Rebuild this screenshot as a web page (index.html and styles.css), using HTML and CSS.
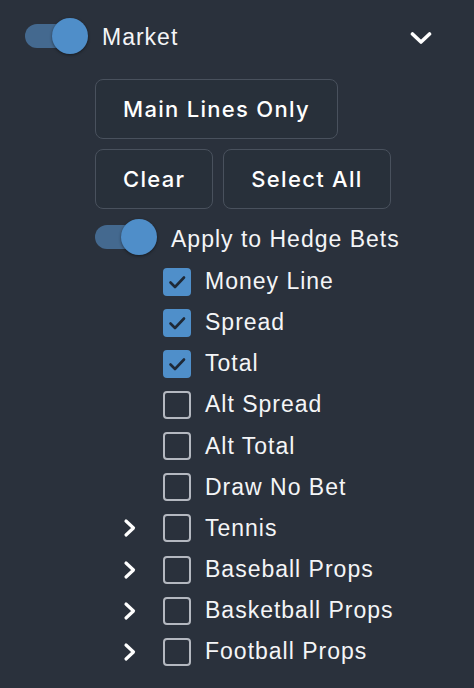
FILE: index.html
```html
<!DOCTYPE html>
<html>
<head>
<meta charset="utf-8">
<link rel="stylesheet" href="styles.css">
</head>
<body>
<div class="panel">
  <div class="header">
    <div class="toggle on"><span class="track"></span><span class="knob"></span></div>
    <span class="title">Market</span>
    <svg class="chev-down" width="22" height="14" viewBox="0 0 22 14"><path d="M2.5 3 L11 11 L19.5 3" fill="none" stroke="#fff" stroke-width="3.6" stroke-linecap="round" stroke-linejoin="round"/></svg>
  </div>
  <div class="content">
    <div class="btn-row"><button class="btn">Main Lines Only</button></div>
    <div class="btn-row"><button class="btn">Clear</button><button class="btn">Select All</button></div>
    <div class="hedge">
      <div class="toggle on"><span class="track"></span><span class="knob"></span></div>
      <span class="label">Apply to Hedge Bets</span>
    </div>
    <ul class="list">
      <li class="row"><span class="slot"></span><span class="cb checked"><svg width="28" height="28" viewBox="0 0 28 28"><path d="M7.5 14.5 L12 19 L21 9.5" fill="none" stroke="#1e2937" stroke-width="2.6" stroke-linecap="round" stroke-linejoin="round"/></svg></span><span class="label">Money Line</span></li>
      <li class="row"><span class="slot"></span><span class="cb checked"><svg width="28" height="28" viewBox="0 0 28 28"><path d="M7.5 14.5 L12 19 L21 9.5" fill="none" stroke="#1e2937" stroke-width="2.6" stroke-linecap="round" stroke-linejoin="round"/></svg></span><span class="label">Spread</span></li>
      <li class="row"><span class="slot"></span><span class="cb checked"><svg width="28" height="28" viewBox="0 0 28 28"><path d="M7.5 14.5 L12 19 L21 9.5" fill="none" stroke="#1e2937" stroke-width="2.6" stroke-linecap="round" stroke-linejoin="round"/></svg></span><span class="label">Total</span></li>
      <li class="row"><span class="slot"></span><span class="cb"></span><span class="label">Alt Spread</span></li>
      <li class="row"><span class="slot"></span><span class="cb"></span><span class="label">Alt Total</span></li>
      <li class="row"><span class="slot"></span><span class="cb"></span><span class="label">Draw No Bet</span></li>
      <li class="row"><span class="slot"><svg width="14" height="20" viewBox="0 0 14 20"><path d="M3 3 L10.5 10 L3 17" fill="none" stroke="#fff" stroke-width="3.2" stroke-linecap="round" stroke-linejoin="round"/></svg></span><span class="cb"></span><span class="label">Tennis</span></li>
      <li class="row"><span class="slot"><svg width="14" height="20" viewBox="0 0 14 20"><path d="M3 3 L10.5 10 L3 17" fill="none" stroke="#fff" stroke-width="3.2" stroke-linecap="round" stroke-linejoin="round"/></svg></span><span class="cb"></span><span class="label">Baseball Props</span></li>
      <li class="row"><span class="slot"><svg width="14" height="20" viewBox="0 0 14 20"><path d="M3 3 L10.5 10 L3 17" fill="none" stroke="#fff" stroke-width="3.2" stroke-linecap="round" stroke-linejoin="round"/></svg></span><span class="cb"></span><span class="label">Basketball Props</span></li>
      <li class="row"><span class="slot"><svg width="14" height="20" viewBox="0 0 14 20"><path d="M3 3 L10.5 10 L3 17" fill="none" stroke="#fff" stroke-width="3.2" stroke-linecap="round" stroke-linejoin="round"/></svg></span><span class="cb"></span><span class="label">Football Props</span></li>
    </ul>
  </div>
</div>
</body>
</html>
```
FILE: styles.css
```css
html, body {
  margin: 0;
  padding: 0;
  background: #2a313c;
  height: 100%;
}
body {
  font-family: "Liberation Sans", Arial, sans-serif;
  color: #f4f5f7;
}
.panel {
  padding: 0;
}
.header {
  display: flex;
  align-items: center;
  height: 72px;
  padding-left: 25px;
  padding-right: 42px;
}
.title {
  font-size: 23px;
  letter-spacing: 1px;
  margin-left: 14px;
  margin-top: 2px;
  flex: 1;
}
.chev-down {
  margin-top: 4px;
}
.toggle {
  position: relative;
  width: 63px;
  height: 36px;
  flex: none;
}
.track {
  position: absolute;
  left: 0;
  top: 6px;
  width: 60px;
  height: 24px;
  border-radius: 12px;
  background: #44698f;
}
.knob {
  position: absolute;
  right: 0;
  top: 0;
  width: 36px;
  height: 36px;
  border-radius: 50%;
  background: #4f8ec9;
  box-shadow: 0 1px 3px rgba(0, 0, 0, 0.45);
}
.content {
  padding-left: 95px;
  padding-top: 7px;
}
.btn-row {
  display: flex;
  gap: 10px;
  margin-bottom: 10px;
}
.btn {
  height: 60px;
  padding: 0 27px;
  background: #28303a;
  border: 1.5px solid #49515d;
  border-radius: 8px;
  color: #ffffff;
  font-family: Inter, "Open Sans", sans-serif;
  font-weight: 500;
  font-size: 22px;
  letter-spacing: 1.3px;
}
.hedge {
  display: flex;
  align-items: center;
  gap: 14px;
  height: 36px;
  margin-top: 0;
}
.hedge .toggle {
  width: 62px;
}
.hedge .label {
  margin-top: 4px;
}
.label {
  font-size: 23px;
  letter-spacing: 1px;
}
.list {
  list-style: none;
  margin: 6px 0 0 28px;
  padding: 0;
}
.row {
  display: flex;
  align-items: center;
  height: 41.15px;
}
.slot {
  width: 40px;
  display: flex;
  align-items: center;
}
.cb {
  width: 28px;
  height: 28px;
  box-sizing: border-box;
  border: 2.5px solid #b4b8c0;
  border-radius: 4px;
  margin-right: 14px;
  flex: none;
  display: flex;
  align-items: center;
  justify-content: center;
}
.cb.checked {
  background: #4f8fca;
  border-color: #4f8fca;
}
.cb svg {
  flex: none;
}
```
